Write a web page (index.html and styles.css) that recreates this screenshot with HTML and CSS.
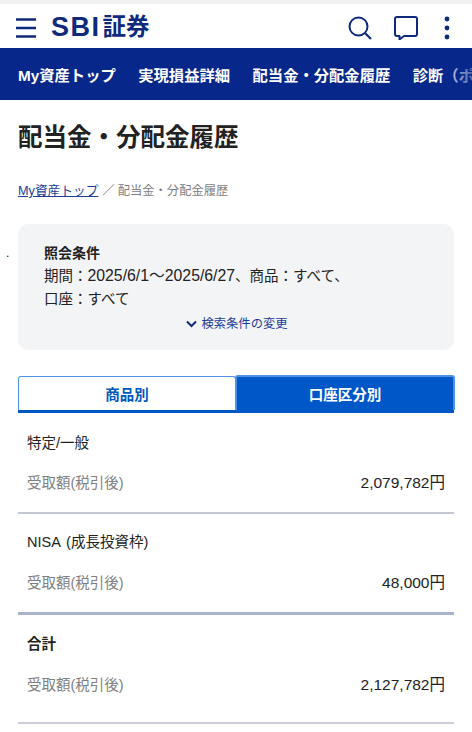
FILE: index.html
```html
<!DOCTYPE html>
<html lang="ja">
<head>
<meta charset="utf-8">
<title>配当金・分配金履歴</title>
<link rel="stylesheet" href="styles.css">
</head>
<body>
<header class="topbar">
  <div class="brand">
    <svg class="menu" width="22" height="22" viewBox="0 0 22 22"><path d="M1 2.500h20M1 11h20M1 19.500h20" stroke="#0f2a7c" stroke-width="2.600" fill="none"/></svg>
    <span class="logo"><span class="logo-en">SBI</span><span class="logo-ja">証券</span></span>
  </div>
  <div class="actions">
    <svg width="24" height="24" viewBox="0 0 24 24"><circle cx="10.500" cy="10.500" r="9" stroke="#0f2a7c" stroke-width="2" fill="none"/><path d="M17 17l6 6" stroke="#0f2a7c" stroke-width="2.200" fill="none"/></svg>
    <svg width="24" height="24" viewBox="0 0 24 24"><path d="M3 1h18a2 2 0 0 1 2 2v15a2 2 0 0 1-2 2H10l-4.500 3.500V20H3a2 2 0 0 1-2-2V3a2 2 0 0 1 2-2z" stroke="#0f2a7c" stroke-width="2" fill="none" stroke-linejoin="round"/></svg>
    <svg class="more" width="8" height="24" viewBox="0 0 8 24"><circle cx="4" cy="3" r="2.400" fill="#0f2a7c"/><circle cx="4" cy="12" r="2.400" fill="#0f2a7c"/><circle cx="4" cy="21" r="2.400" fill="#0f2a7c"/></svg>
  </div>
</header>
<nav class="nav">
  <span class="nav-item">My資産トップ</span>
  <span class="nav-item">実現損益詳細</span>
  <span class="nav-item">配当金・分配金履歴</span>
  <span class="nav-item">診断（ポートフォリオ）</span>
</nav>
<main class="main">
  <h1 class="title">配当金・分配金履歴</h1>
  <p class="crumbs"><a class="crumb-link" href="#">My資産トップ</a><span class="crumb-sep">／</span><span>配当金・分配金履歴</span></p>
  <section class="cond">
    <span class="dot">.</span>
    <h2 class="cond-title">照会条件</h2>
    <p class="cond-text">期間：<span class="cond-date">2025/6/1〜2025/6/27</span>、商品：すべて、<br>口座：すべて</p>
    <div class="cond-change">
      <svg width="11" height="8" viewBox="0 0 11 8"><path d="M1 1.500l4.500 4.500L10 1.500" stroke="#0f2a7c" stroke-width="2" fill="none"/></svg>
      <span>検索条件の変更</span>
    </div>
  </section>
  <div class="tabs">
    <div class="tab">商品別</div>
    <div class="tab tab-on">口座区分別</div>
  </div>
  <section class="row row-first">
    <h3 class="row-name">特定/一般</h3>
    <div class="row-line"><span class="row-label">受取額(税引後)</span><span class="row-val">2,079,782円</span></div>
  </section>
  <section class="row row-nisa">
    <h3 class="row-name">NISA (成長投資枠)</h3>
    <div class="row-line"><span class="row-label">受取額(税引後)</span><span class="row-val">48,000円</span></div>
  </section>
  <section class="row row-total">
    <h3 class="row-name row-name-bold">合計</h3>
    <div class="row-line"><span class="row-label">受取額(税引後)</span><span class="row-val">2,127,782円</span></div>
  </section>
</main>
</body>
</html>
```
FILE: styles.css
```css
* { box-sizing: border-box; }
html, body { margin: 0; padding: 0; }
body {
  width: 472px;
  height: 732px;
  overflow: hidden;
  background: #fff;
  color: #222;
  font-family: "Liberation Sans", "Noto Sans CJK JP", sans-serif;
}
.topbar {
  height: 48px;
  border-top: 4px solid #f1f1f1;
  padding: 3px 21px 0 15px;
  display: flex;
  align-items: center;
  justify-content: space-between;
}
.brand { display: flex; align-items: center; gap: 14px; }
.menu { display: block; }
.logo { display: flex; align-items: center; color: #0f2a7c; line-height: 1; font-weight: 700; }
.logo-en { font-size: 27px; letter-spacing: 1.500px; }
.logo-ja { font-size: 23.500px; margin-left: 2px; }
.actions { display: flex; align-items: center; gap: 22px; }
.actions svg { display: block; }
.more { margin-left: 3px; }
.nav {
  position: relative;
  height: 52px;
  background: #07278a;
  display: flex;
  align-items: center;
  gap: 22.500px;
  padding-left: 18px;
  overflow: hidden;
  white-space: nowrap;
  color: #fff;
  font-size: 15.300px;
  font-weight: 700;
}
.nav::after {
  content: "";
  position: absolute;
  top: 0;
  right: 0;
  width: 36px;
  height: 100%;
  background: linear-gradient(to right, rgba(7, 39, 138, 0), rgba(7, 39, 138, 0.7));
}
.nav-item { flex: none; }
.main { padding: 0 18px; }
.title {
  margin: 22px 0 0;
  font-size: 24.500px;
  line-height: 32px;
  font-weight: 700;
  color: #222;
}
.crumbs {
  margin: 27px 0 0;
  font-size: 12.300px;
  line-height: 20px;
  color: #808080;
}
.crumb-link { color: #1e3c96; text-decoration: underline; font-size: 12.700px; }
.crumb-sep { margin: 0 3px 0 4px; }
.cond {
  position: relative;
  height: 126px;
  margin-top: 23px;
  padding: 18px 26px 0;
  background: #f3f4f6;
  border-radius: 10px;
}
.dot { position: absolute; left: -12px; top: 22px; font-size: 12px; color: #222; }
.cond-title { margin: 0; font-size: 14px; line-height: 23px; font-weight: 700; }
.cond-text { margin: 0; font-size: 14.500px; line-height: 22.500px; color: #222; }
.cond-date { font-size: 15.800px; line-height: 1; }
.cond-change {
  margin-top: 4px;
  padding-left: 2px;
  display: flex;
  align-items: center;
  justify-content: center;
  gap: 4px;
  font-size: 12.300px;
  line-height: 20px;
  color: #1e3c96;
}
.tabs {
  display: flex;
  margin-top: 26px;
  height: 37px;
  border-bottom: 3px solid #0058c8;
}
.tab {
  flex: 1;
  display: flex;
  align-items: center;
  justify-content: center;
  padding-bottom: 1px;
  background: #fff;
  color: #0058c0;
  font-size: 14.500px;
  font-weight: 700;
  border: 1px solid #4f93e4;
  border-bottom: 0;
  border-radius: 3px 3px 0 0;
}
.tab-on {
  margin: -1px -1px 0 -1px;
  background: #0058c8;
  color: #fff;
  border-width: 2px;
}
.row {
  height: 101px;
  padding: 16px 9px 0;
  border-bottom: 2px solid #c4c8d4;
}
.row-first { padding-top: 18px; }
.row-nisa { border-bottom: 3px solid #aab3cc; }
.row-total { padding-top: 17px; height: 109px; border-bottom-color: #ccced9; }
.row-name { margin: 0; font-size: 14.500px; line-height: 24px; font-weight: 400; color: #222; word-spacing: 2px; }
.row-name-bold { font-weight: 700; }
.row-line {
  margin-top: 16px;
  display: flex;
  justify-content: space-between;
  align-items: center;
  line-height: 24px;
}
.row-nisa .row-line { margin-top: 17px; }
.row-total .row-line { margin-top: 17px; }
.row-label { font-size: 14.500px; color: #808080; }
.row-val { font-size: 15.500px; color: #222; }
```
